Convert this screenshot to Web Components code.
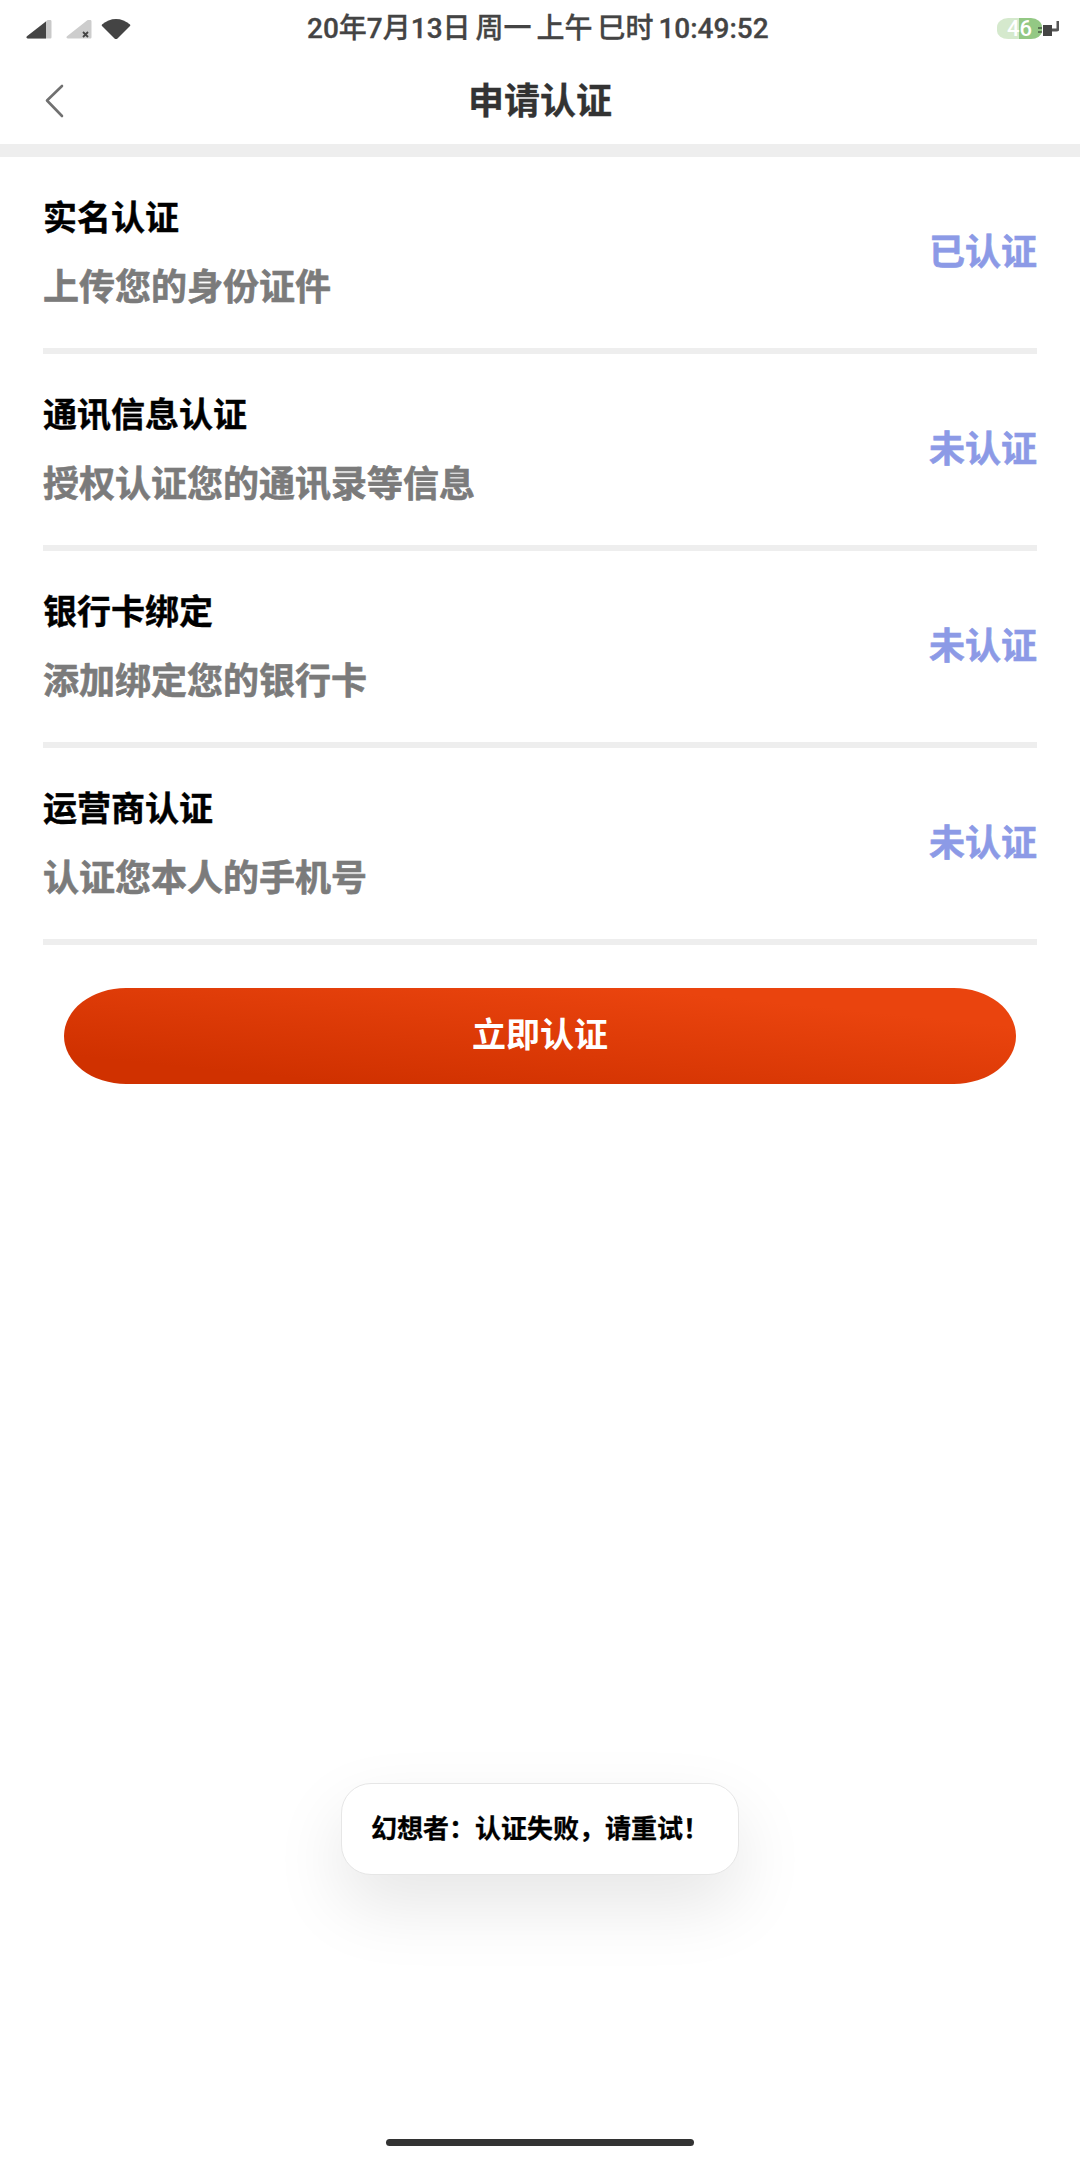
<!DOCTYPE html>
<html lang="zh">
<head>
<meta charset="utf-8">
<title>申请认证</title>
<style>
  html,body{margin:0;padding:0;background:#fff;}
  body{
    width:1080px;
    height:2160px;
    overflow:hidden;
    font-family:"Noto Sans CJK SC","Noto Sans",sans-serif;
  }
  #app{display:flex;flex-direction:column;height:2160px;}
</style>
</head>
<body>
<div id="app">
  <status-bar>20年7月13日 周一 上午 巳时 10:49:52</status-bar>
  <nav-header>申请认证</nav-header>
  <auth-row title="实名认证" desc="上传您的身份证件" state="已认证"></auth-row>
  <auth-row title="通讯信息认证" desc="授权认证您的通讯录等信息" state="未认证"></auth-row>
  <auth-row title="银行卡绑定" desc="添加绑定您的银行卡" state="未认证"></auth-row>
  <auth-row title="运营商认证" desc="认证您本人的手机号" state="未认证"></auth-row>
  <primary-button>立即认证</primary-button>
  <toast-box>幻想者：认证失败，请重试！</toast-box>
  <home-bar></home-bar>
</div>
<script>
class StatusBar extends HTMLElement{
  constructor(){
    super()
    this.attachShadow({mode:'open'})
    this.shadowRoot.innerHTML = `
    <style>
      :host{display:block;height:58px;position:relative;}
      .bar{display:flex;justify-content:space-between;align-items:center;height:58px;padding:0 21px 0 26px;}
      .left,.right{display:flex;align-items:center;}
      .left{gap:14px;}
      .center{font-family:Roboto,"Noto Sans CJK SC",sans-serif;font-size:28px;font-weight:500;word-spacing:-2px;color:#444;white-space:nowrap;position:absolute;left:307px;top:8px;line-height:42px;-webkit-text-stroke:.3px #444;}
      .batt{width:45px;height:26px;border-radius:11px;background:linear-gradient(to right,#d5e9cd 22px,#93c884 22px);background-clip:content-box;box-sizing:border-box;padding:2px 0 3px;font-size:22px;font-weight:500;color:#fff;text-align:center;line-height:21px;font-family:Roboto,sans-serif;}
      svg{display:block;}
    </style>
    <div class="bar">
      <div class="left">
        <svg width="26" height="21" viewBox="0 0 26 21"><path d="M24 1c1 0 1.500.5 1.500 1.500V18c0 1-.5 1.500-1.500 1.500H2c-1.500 0-2-1.500-1-2.300L21 1.500C22 .8 23 1 24 1z" fill="#c9c9c9"/><path d="M20 2.500V19.500H2c-1.500 0-2-1.500-1-2.300z" fill="#444"/></svg>
        <svg width="26" height="21" viewBox="0 0 26 21"><path d="M24 1c1 0 1.500.5 1.500 1.500V18c0 1-.5 1.500-1.500 1.500H2c-1.500 0-2-1.500-1-2.300L21 1.500C22 .8 23 1 24 1z" fill="#cdcdcd"/><path d="M17 13l5 5M22 13l-5 5" stroke="#444" stroke-width="1.800"/></svg>
        <svg style="margin-left:-5px" width="30" height="22" viewBox="0 0 30 22"><path d="M1 6.500C5 3 10 1 15 1s10 2 14 5.500c.5.500.5 1 0 1.500L16.500 20.500c-.8.800-2.200.8-3 0L1 8c-.5-.5-.5-1 0-1.500z" fill="#444"/></svg>
      </div>
      <div class="center"><slot></slot></div>
      <div class="right">
        <div class="batt">46</div>
        <svg style="margin-left:-4px" width="21" height="18" viewBox="0 0 21 18"><path d="M0 8h4M0 12h4" stroke="#222" stroke-width="1.200"/><rect x="5" y="5" width="9" height="11" fill="#444"/><path d="M14 10h4.500c1 0 1.500-.5 1.500-1.500V1" fill="none" stroke="#555" stroke-width="3"/></svg>
      </div>
    </div>`
  }
}
class NavHeader extends HTMLElement{
  constructor(){
    super()
    this.attachShadow({mode:'open'})
    this.shadowRoot.innerHTML = `
    <style>
      :host{display:block;border-bottom:13px solid #eee;}
      .nav{position:relative;box-sizing:border-box;height:86px;padding-bottom:6px;display:flex;align-items:center;justify-content:center;}
      .title{font-size:36px;font-weight:700;color:#333;line-height:56px;-webkit-text-stroke:.3px #333;}
      svg{position:absolute;left:44px;top:26px;}
    </style>
    <div class="nav">
      <svg width="20" height="34" viewBox="0 0 20 34"><path d="M18 2L3 16.500 18 32" fill="none" stroke="#707070" stroke-width="2.600" stroke-linecap="round" stroke-linejoin="round"/></svg>
      <div class="title"><slot></slot></div>
    </div>`
  }
}
class AuthRow extends HTMLElement{
  constructor(){
    super()
    this.attachShadow({mode:'open'})
  }
  connectedCallback(){
    this.shadowRoot.innerHTML = `
    <style>
      :host{display:block;margin:0 43px;height:197px;box-sizing:border-box;border-bottom:6px solid #eee;}
      .row{display:flex;justify-content:space-between;align-items:center;box-sizing:border-box;height:191px;padding-bottom:8px;}
      .info{display:flex;flex-direction:column;gap:16px;padding-top:2px;}
      .name{font-size:34px;font-weight:700;color:#000;line-height:52px;-webkit-text-stroke:.4px #000;}
      .desc{font-size:36px;font-weight:700;color:#7b7b7b;line-height:52px;-webkit-text-stroke:.6px #7b7b7b;}
      .state{font-size:36px;font-weight:700;color:#8c9ae6;line-height:52px;-webkit-text-stroke:.6px #8c9ae6;}
    </style>
    <div class="row">
      <div class="info">
        <div class="name">${this.getAttribute('title')}</div>
        <div class="desc">${this.getAttribute('desc')}</div>
      </div>
      <div class="state">${this.getAttribute('state')}</div>
    </div>`
  }
}
class PrimaryButton extends HTMLElement{
  constructor(){
    super()
    this.attachShadow({mode:'open'})
    this.shadowRoot.innerHTML = `
    <style>
      :host{display:block;margin:43px 64px 0;}
      .btn{box-sizing:border-box;height:96px;padding-bottom:8px;border-radius:62px/48px;background:linear-gradient(to top right,#d03100 15%,#ea440e 80%);display:flex;align-items:center;justify-content:center;color:#fff;font-size:34px;font-weight:700;}
    </style>
    <div class="btn"><slot></slot></div>`
  }
}
class ToastBox extends HTMLElement{
  constructor(){
    super()
    this.attachShadow({mode:'open'})
    this.shadowRoot.innerHTML = `
    <style>
      :host{display:block;position:absolute;left:341px;top:1783px;}
      .toast{box-sizing:border-box;width:398px;height:92px;padding:0 29px 6px;display:flex;align-items:center;background:#fff;border:1px solid #e6e6e6;border-radius:30px;box-shadow:0 30px 70px rgba(0,0,0,.1);font-size:26px;font-weight:700;color:#000;white-space:nowrap;-webkit-text-stroke:.3px #000;}
    </style>
    <div class="toast"><slot></slot></div>`
  }
}
class HomeBar extends HTMLElement{
  constructor(){
    super()
    this.attachShadow({mode:'open'})
    this.shadowRoot.innerHTML = `
    <style>
      :host{display:block;position:absolute;left:386px;top:2139px;width:308px;height:7px;border-radius:4px;background:#333;}
    </style>`
  }
}
customElements.define('status-bar', StatusBar)
customElements.define('nav-header', NavHeader)
customElements.define('auth-row', AuthRow)
customElements.define('primary-button', PrimaryButton)
customElements.define('toast-box', ToastBox)
customElements.define('home-bar', HomeBar)
</script>
</body>
</html>
